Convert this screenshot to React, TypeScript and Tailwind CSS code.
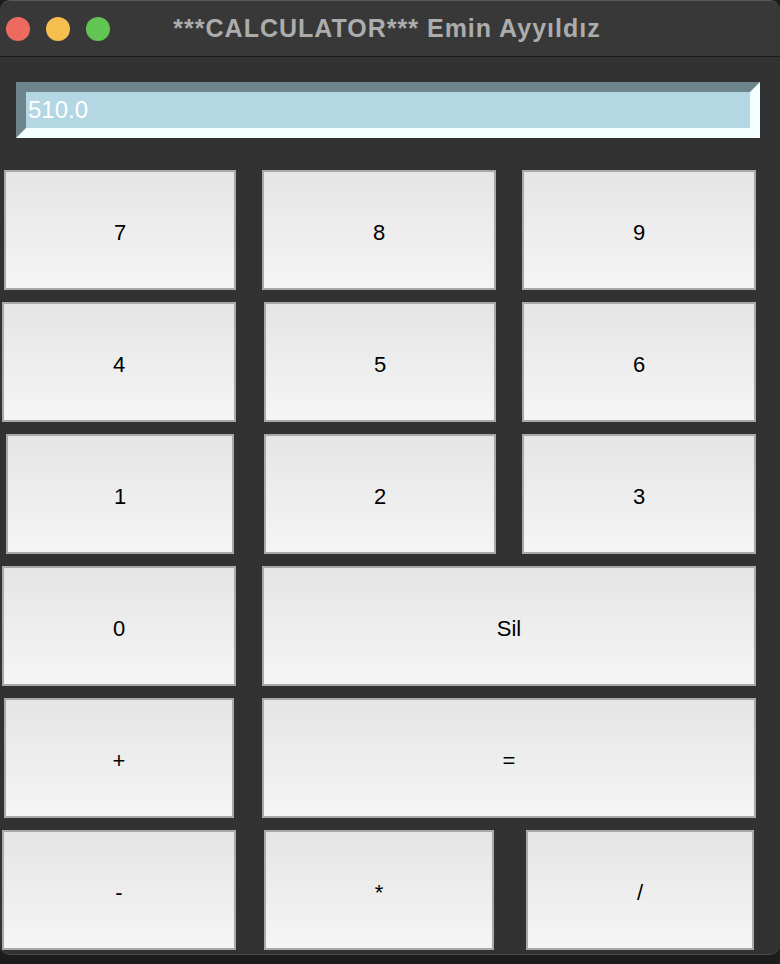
import React from 'react'

type Key = { label: string; ml: string; w: string }

const rows: Key[][] = [
  [
    { label: '7', ml: 'ml-[4px]', w: 'w-[232px]' },
    { label: '8', ml: 'ml-[26px]', w: 'w-[234px]' },
    { label: '9', ml: 'ml-[26px]', w: 'w-[234px]' },
  ],
  [
    { label: '4', ml: 'ml-[2px]', w: 'w-[234px]' },
    { label: '5', ml: 'ml-[28px]', w: 'w-[232px]' },
    { label: '6', ml: 'ml-[26px]', w: 'w-[234px]' },
  ],
  [
    { label: '1', ml: 'ml-[6px]', w: 'w-[228px]' },
    { label: '2', ml: 'ml-[30px]', w: 'w-[232px]' },
    { label: '3', ml: 'ml-[26px]', w: 'w-[234px]' },
  ],
  [
    { label: '0', ml: 'ml-[2px]', w: 'w-[234px]' },
    { label: 'Sil', ml: 'ml-[26px]', w: 'w-[494px]' },
  ],
  [
    { label: '+', ml: 'ml-[4px]', w: 'w-[230px]' },
    { label: '=', ml: 'ml-[28px]', w: 'w-[494px]' },
  ],
  [
    { label: '-', ml: 'ml-[2px]', w: 'w-[234px]' },
    { label: '*', ml: 'ml-[28px]', w: 'w-[230px]' },
    { label: '/', ml: 'ml-[32px]', w: 'w-[228px]' },
  ],
]

const App = () => {
  return (
    <div className="w-[780px] h-[964px] bg-[#1c1c1c] overflow-hidden" style={{ fontFamily: '"Liberation Sans", Arial, sans-serif' }}>
      <div className="w-[780px] h-[955px] bg-[#323232] rounded-[10px] border-t border-[#5a5a5a] border-b border-b-[#4a4a4a] flex flex-col overflow-hidden">
        {/* Title bar */}
        <div className="h-[56px] shrink-0 bg-[#383838] border-b border-[#1a1a1a] flex items-center relative">
          <div className="flex items-center gap-[16px] pl-[6px]">
            <span className="w-[24px] h-[24px] rounded-full bg-[#ed6a5e]" />
            <span className="w-[24px] h-[24px] rounded-full bg-[#f5bf4f]" />
            <span className="w-[24px] h-[24px] rounded-full bg-[#61c554]" />
          </div>
          <div className="absolute inset-0 flex items-center justify-center">
            <span className="text-[25px] font-bold tracking-[1px] text-[#acacac] ml-[-6px]">***CALCULATOR*** Emin Ayyıldız</span>
          </div>
        </div>

        {/* Entry */}
        <div className="mt-[25px] ml-[16px] w-[744px] h-[56px] border-[10px] border-t-[#6e848c] border-l-[#6e848c] border-b-[#f4ffff] border-r-[#f4ffff] bg-[#b4d7e4] flex items-center">
          <span className="text-white text-[24px] pl-[2px] leading-none">510.0</span>
        </div>

        {/* Keys */}
        <div className="mt-[32px] flex flex-col gap-[12px]">
          {rows.map((row, i) => (
            <div key={i} className="flex h-[120px]">
              {row.map((k) => (
                <div
                  key={k.label}
                  className={`${k.ml} ${k.w} h-[120px] border-2 border-[#a9a9a9] bg-gradient-to-b from-[#e5e5e5] to-[#f5f5f5] flex items-center justify-center pt-[4px] text-[22px] text-black`}
                >
                  {k.label}
                </div>
              ))}
            </div>
          ))}
        </div>
      </div>
    </div>
  )
}

export default App
